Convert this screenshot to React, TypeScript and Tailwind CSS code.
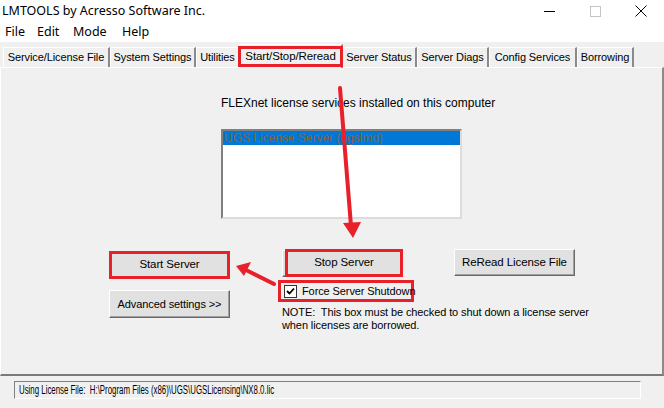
import React from 'react';

const tabs: { label: string; w: number }[] = [
  { label: 'Service/License File', w: 107 },
  { label: 'System Settings', w: 86 },
  { label: 'Utilities', w: 44 },
  { label: 'Start/Stop/Reread', w: 104 },
  { label: 'Server Status', w: 75 },
  { label: 'Server Diags', w: 72 },
  { label: 'Config Services', w: 88 },
  { label: 'Borrowing', w: 57 },
];

const RED = '#e8202a';

const Button = ({ label, className = '' }: { label: string; className?: string }) => (
  <div
    className={
      'flex items-center justify-center whitespace-nowrap bg-[#e1e1e1] border border-t-white border-l-white border-r-[#696969] border-b-[#696969] shadow-[inset_-1px_-1px_0_#a0a0a0] text-black ' +
      className
    }
  >
    {label}
  </div>
);

const Arrows = () => (
  <svg className="pointer-events-none absolute inset-0" width={664} height={408} viewBox="0 0 664 408">
    <line x1={340} y1={88} x2={351} y2={226} stroke={RED} strokeWidth={4} strokeLinecap="round" />
    <polygon points="343,223 361,222 353,238" fill={RED} />
    <line x1={274} y1={284} x2={246} y2={270} stroke={RED} strokeWidth={4} strokeLinecap="round" />
    <polygon points="236,266 251,262 244,276" fill={RED} />
  </svg>
);

export default function App() {
  return (
    <div className="relative w-[664px] h-[408px] overflow-hidden bg-[#f0f0f0] text-black font-['Liberation_Sans',Arial,sans-serif]">
      {/* title bar */}
      <div className="flex h-[22px] items-center justify-between bg-white">
        <span className="whitespace-nowrap pl-[2px] text-[12.5px] font-['Noto_Sans',sans-serif] text-black">
          LMTOOLS by Acresso Software Inc.
        </span>
        <div className="flex h-full items-center">
          <div className="flex w-[46px] h-full items-center justify-center">
            <div className="w-[11px] h-px bg-black" />
          </div>
          <div className="flex w-[46px] h-full items-center justify-center">
            <div className="w-[11px] h-[11px] border border-[#c4c4c4]" />
          </div>
          <div className="flex w-[46px] h-full items-center justify-center">
            <svg width={12} height={12} viewBox="0 0 12 12">
              <path d="M0.5 0.5 L11.5 11.5 M11.5 0.5 L0.5 11.5" stroke="#000" strokeWidth={1} />
            </svg>
          </div>
        </div>
      </div>

      {/* menu bar */}
      <div className="flex h-[20px] items-center bg-white pl-[5px] text-[12.5px] font-['Noto_Sans',sans-serif]">
        <span className="w-[32px]">File</span>
        <span className="w-[36px]">Edit</span>
        <span className="w-[49px]">Mode</span>
        <span>Help</span>
      </div>

      {/* tabs */}
      <div className="flex h-[25px] items-end pl-[3px] text-[11px] tracking-[-0.1px]">
        {tabs.map((t) =>
          t.label === 'Start/Stop/Reread' ? (
            <div
              key={t.label}
              style={{ width: t.w }}
              className="relative z-10 -mx-[1px] mb-[-1px] flex h-[24px] shrink-0 items-start justify-center border-l border-t border-r-2 border-l-white border-t-white border-r-[#8a8a8a] bg-[#f0f0f0] pt-[1px]"
            >
              <div className="whitespace-nowrap border-[3px] px-[4px] text-[11.5px] leading-[15px]" style={{ borderColor: RED }}>
                {t.label}
              </div>
            </div>
          ) : (
            <div
              key={t.label}
              style={{ width: t.w }}
              className="flex h-[20px] shrink-0 items-center justify-center whitespace-nowrap border-l border-t border-r-2 border-l-white border-t-white border-r-[#8a8a8a]"
            >
              {t.label}
            </div>
          ),
        )}
      </div>

      {/* panel */}
      <div className="relative h-[309px] border-l border-t border-r-2 border-b-2 border-l-white border-t-white border-r-[#8a8a8a] border-b-[#7a7a7a] text-[11px] tracking-[-0.1px]">
        <div className="whitespace-nowrap pl-[220px] pt-[26px] text-[12px] tracking-normal">
          FLEXnet license services installed on this computer
        </div>

        <div className="ml-[220px] mt-[17px] h-[90px] w-[241px] border-2 border-t-[#808080] border-l-[#808080] border-r-[#dcdcdc] border-b-[#dcdcdc] bg-white">
          <div className="h-[14px] overflow-hidden bg-[#0078d7] pl-[1px] leading-[14px] text-[#8a6238]">
            <span className="inline-block origin-left scale-x-[0.92] whitespace-nowrap text-[13px] tracking-normal">
              UGS License Server (ugslmd)
            </span>
          </div>
        </div>

        <div className="ml-[108px] mt-[31px] flex">
          <div className="flex w-[121px] flex-col">
            <div
              className="mt-[1px] flex h-[28px] items-center justify-center border-[3px] bg-[#e1e1e1] text-[11.5px]"
              style={{ borderColor: RED }}
            >
              Start Server
            </div>
            <Button label="Advanced settings >>" className="mt-[11px] h-[28px]" />
          </div>

          <div className="ml-[52px] flex w-[330px] flex-col">
            <div className="relative h-[27px] w-[118px]">
              <Button label="" className="h-[27px] w-[115px]" />
              <div
                className="absolute left-[3px] -top-[1px] flex h-[28px] w-[118px] items-center justify-center border-[3px] bg-[#e1e1e1] text-[11.5px]"
                style={{ borderColor: RED }}
              >
                Stop Server
              </div>
            </div>
            <div
              className="mt-[3px] -ml-[4px] flex h-[22px] w-[136px] items-center border-[3px] pl-[3px]"
              style={{ borderColor: RED }}
            >
              <div className="flex h-[13px] w-[13px] shrink-0 items-center justify-center border border-[#333] bg-white">
                <svg width={9} height={9} viewBox="0 0 9 9">
                  <path d="M1 4 L3.5 6.5 L8 1.5" fill="none" stroke="#000" strokeWidth={1.8} />
                </svg>
              </div>
              <span className="ml-[5px] whitespace-nowrap">Force Server Shutdown</span>
            </div>
            <div className="mt-[4px] whitespace-nowrap leading-[13px]">
              NOTE:&nbsp; This box must be checked to shut down a license server
              <br />
              when licenses are borrowed.
            </div>
          </div>
        </div>

        <Button label="ReRead License File" className="absolute left-[453px] top-[181px] h-[27px] w-[121px] text-[11.5px]" />
      </div>

      {/* status bar */}
      <div className="px-[14px] pt-[5px]">
        <div className="flex h-[18px] w-[627px] items-center overflow-hidden border border-t-[#808080] border-l-[#808080] border-r-white border-b-white pl-[4px]">
          <span className="inline-block origin-left scale-x-[0.655] whitespace-nowrap text-[12px]">
            Using License File:&nbsp; H:\Program Files (x86)\UGS\UGSLicensing\NX8.0.lic
          </span>
        </div>
      </div>

      <Arrows />
    </div>
  );
}
